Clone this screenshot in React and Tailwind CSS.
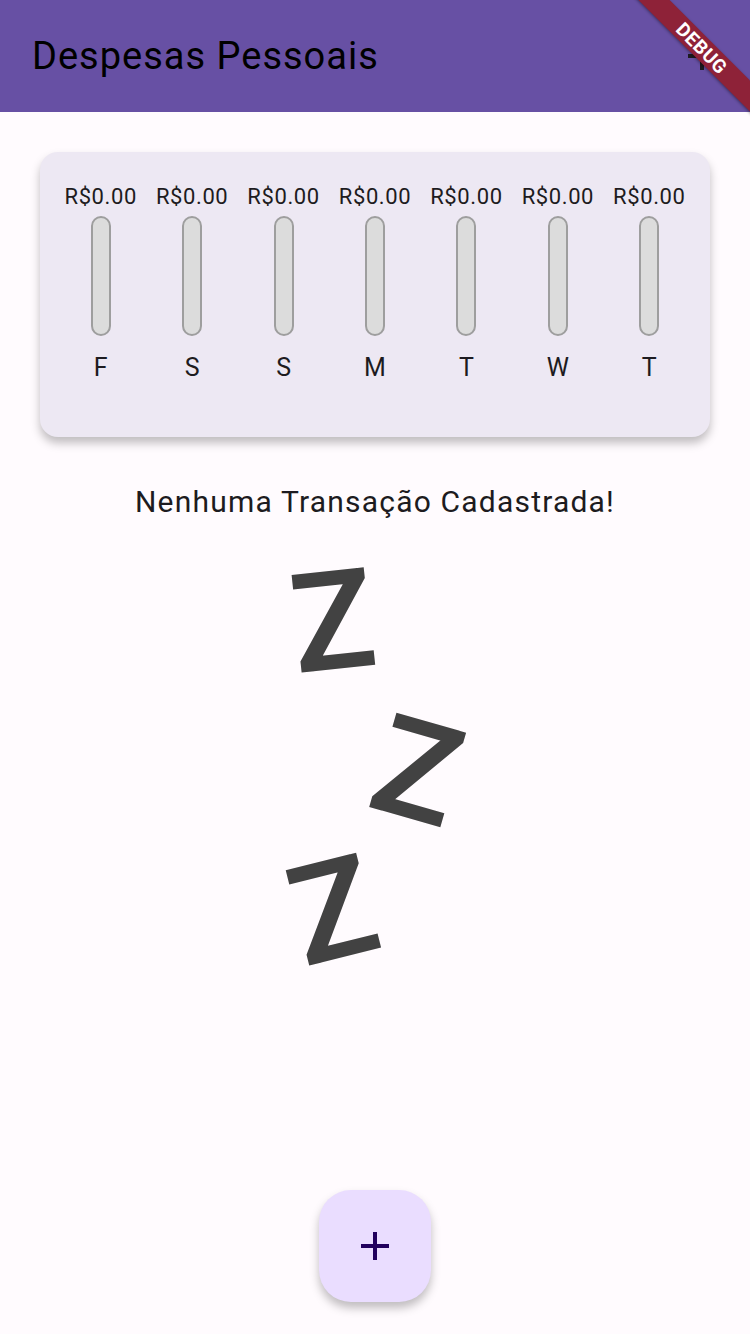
import React from "react";

const days = ["F", "S", "S", "M", "T", "W", "T"];

const font = { fontFamily: "Roboto, 'Noto Sans', sans-serif" };

const Bar = ({ day }) => (
  <div className="flex flex-col items-center">
    <div className="h-[28px] flex items-center text-[22px] tracking-[0.6px] leading-none text-[#1d1b20] whitespace-nowrap">
      R$0.00
    </div>
    <div className="mt-[5px] h-[120px] w-[20px] rounded-full border-2 border-[#9e9e9e] bg-[#dcdcdc]" />
    <div className="mt-[16px] h-[30px] flex items-center text-[25px] leading-none text-[#1d1b20]">
      {day}
    </div>
  </div>
);

const Sleeping = () => (
  <svg width="300" height="480" viewBox="-30 -15 300 480" className="block">
    <g fill="#424242" fontFamily="Roboto, sans-serif" fontWeight="600" fontSize="138" textAnchor="middle">
      <text x="78" y="120" transform="rotate(-6 78 71)">Z</text>
      <text x="163" y="270" transform="rotate(16 163 221)">Z</text>
      <text x="78" y="409" transform="rotate(-14 78 360)">Z</text>
    </g>
  </svg>
);

const App = () => {
  return (
    <div className="relative w-[750px] h-[1334px] overflow-hidden bg-[#fffbfe]" style={font}>
      {/* App bar */}
      <header className="h-[112px] bg-[#6750a4] flex items-center justify-between pl-[32px] pr-[24px]">
        <h1 className="text-[38px] tracking-[1px] leading-none text-black">Despesas Pessoais</h1>
        <button className="w-[48px] h-[48px] flex items-center justify-center text-[#1d1b20]">
          <svg width="48" height="48" viewBox="0 0 24 24" fill="currentColor">
            <path d="M19 13h-6v6h-2v-6H5v-2h6V5h2v6h6v2z" />
          </svg>
        </button>
      </header>

      {/* Chart */}
      <div className="mx-[40px] mt-[40px] h-[285px] rounded-[18px] bg-[#ede8f3] shadow-[0_6px_10px_rgba(0,0,0,0.25)] px-[15px] pt-[31px]">
        <div className="grid grid-cols-7">
          {days.map((d, i) => (
            <Bar key={i} day={d} />
          ))}
        </div>
      </div>

      {/* Empty state */}
      <div className="flex flex-col items-center">
        <p className="mt-[46px] text-[30px] tracking-[1.2px] leading-[38px] text-[#1d1b20]">Nenhuma Transação Cadastrada!</p>
        <div className="mt-[13px]">
          <Sleeping />
        </div>
      </div>

      {/* FAB */}
      <div className="absolute left-[319px] top-[1190px]">
        <button className="w-[112px] h-[112px] rounded-[32px] bg-[#eaddff] flex items-center justify-center text-[#21005d] shadow-[0_6px_10px_rgba(0,0,0,0.25)]">
          <svg width="48" height="48" viewBox="0 0 24 24" fill="currentColor">
            <path d="M19 13h-6v6h-2v-6H5v-2h6V5h2v6h6v2z" />
          </svg>
        </button>
      </div>

      {/* Debug banner */}
      <div className="absolute left-[602px] top-[37px] w-[200px] h-[22px] rotate-45 bg-[#8e2238] shadow-[0_1px_3px_rgba(0,0,0,0.4)] flex items-center justify-center">
        <span className="text-white text-[19px] font-bold leading-none tracking-[0.5px]">DEBUG</span>
      </div>
    </div>
  );
};

export default App;
